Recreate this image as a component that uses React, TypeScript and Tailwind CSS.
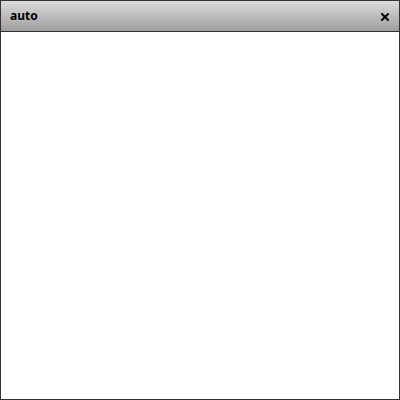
export default function App() {
  return (
    <div className="w-[400px] h-[400px] bg-white">
      <div className="flex h-full w-full flex-col border border-[#333]">
        {/* Title bar */}
        <div className="flex h-[31px] shrink-0 items-center justify-between border-b border-[#333] bg-gradient-to-b from-[#dcdcdc] to-[#9e9e9e] pl-[9px] pr-[10px]">
          <span className="font-['Noto_Sans',sans-serif] text-[12px] font-bold text-black">auto</span>
          <svg width="8" height="8" viewBox="0 0 8 8" className="mt-[2px]">
            <path d="M1 1 L7 7 M7 1 L1 7" stroke="#000" strokeWidth="2" strokeLinecap="square" />
          </svg>
        </div>
        {/* Body */}
        <div className="flex-1 bg-white" />
      </div>
    </div>
  );
}
